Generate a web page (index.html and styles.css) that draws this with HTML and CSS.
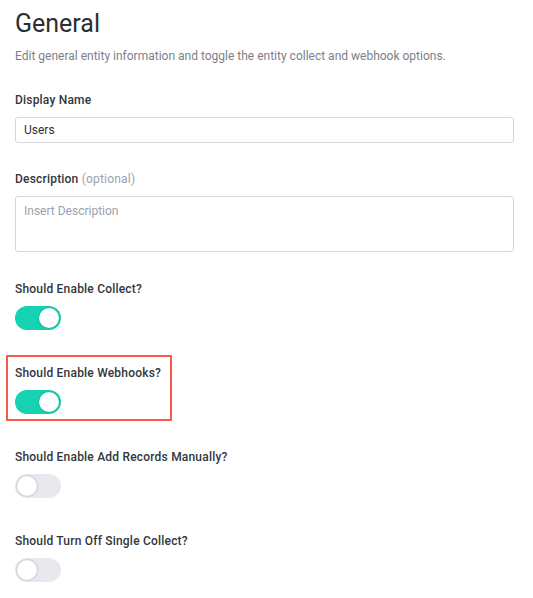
FILE: index.html
```html
<!DOCTYPE html>
<html lang="en">
<head>
<meta charset="utf-8">
<title>General</title>
<link rel="stylesheet" href="styles.css">
</head>
<body>
<main class="page">
  <h1 class="title">General</h1>
  <p class="subtitle">Edit general entity information and toggle the entity collect and webhook options.</p>

  <div class="field">
    <label class="label">Display Name</label>
    <div class="input">Users</div>
  </div>

  <div class="field field-desc">
    <label class="label">Description <span class="optional">(optional)</span></label>
    <div class="textarea"><span class="placeholder">Insert Description</span></div>
  </div>

  <div class="toggle-field first">
    <div class="label">Should Enable Collect?</div>
    <div class="toggle on"><span class="knob"></span></div>
  </div>

  <div class="toggle-field highlight">
    <div class="label">Should Enable Webhooks?</div>
    <div class="toggle on"><span class="knob"></span></div>
  </div>

  <div class="toggle-field">
    <div class="label">Should Enable Add Records Manually?</div>
    <div class="toggle"><span class="knob"></span></div>
  </div>

  <div class="toggle-field">
    <div class="label">Should Turn Off Single Collect?</div>
    <div class="toggle"><span class="knob"></span></div>
  </div>
</main>
</body>
</html>
```

FILE: styles.css
```css
* { box-sizing: border-box; }
html, body { margin: 0; padding: 0; background: #ffffff; }
body {
  font-family: Roboto, "Liberation Sans", sans-serif;
  color: #2f3237;
}
.page {
  width: 533px;
  padding: 9px 19px 0 15px;
  display: flex;
  flex-direction: column;
}
.title {
  margin: 0;
  font-size: 25px;
  font-weight: 400;
  line-height: 30px;
  color: #2c2e33;
}
.subtitle {
  margin: 9px 0 0 0;
  font-size: 12px;
  line-height: 16px;
  color: #7c7f87;
}
.field {
  display: flex;
  flex-direction: column;
  margin-top: 28px;
}
.field-desc { margin-top: 28px; }
.label {
  display: block;
  font-size: 12px;
  line-height: 16px;
  font-weight: 500;
  letter-spacing: 0.2px;
  color: #33363b;
}
.optional {
  font-weight: 400;
  letter-spacing: 0.2px;
  color: #9ba1ad;
}
.input {
  margin-top: 9px;
  height: 26px;
  border: 1px solid #d3d6dd;
  border-radius: 3px;
  padding: 0 8px;
  font-size: 12px;
  line-height: 24px;
  color: #2f3237;
}
.textarea {
  margin-top: 9px;
  height: 56px;
  border: 1px solid #d3d6dd;
  border-radius: 3px;
  padding: 6px 8px;
  font-size: 12px;
  line-height: 16px;
}
.placeholder { color: #9ba1ad; }
.toggle-field {
  display: flex;
  flex-direction: column;
  align-items: flex-start;
  margin-top: 35px;
}
.toggle-field.first { margin-top: 29px; }
.toggle-field.highlight {
  margin: 25px 0 0 -9px;
  width: 166px;
  padding: 8px 0 5px 7px;
  border: 2px solid #f4594b;
}
.toggle-field.highlight + .toggle-field { margin-top: 28px; }
.toggle {
  margin-top: 9px;
  width: 46px;
  height: 24px;
  border-radius: 12px;
  background: #e8e9ef;
  position: relative;
}
.toggle.on { background: #15d2b3; }
.knob {
  position: absolute;
  top: 2px;
  left: 2px;
  width: 20px;
  height: 20px;
  border-radius: 50%;
  background: #ffffff;
  box-shadow: 0 0 2px rgba(0, 0, 0, 0.35);
}
.toggle.on .knob { left: 24px; }
```
